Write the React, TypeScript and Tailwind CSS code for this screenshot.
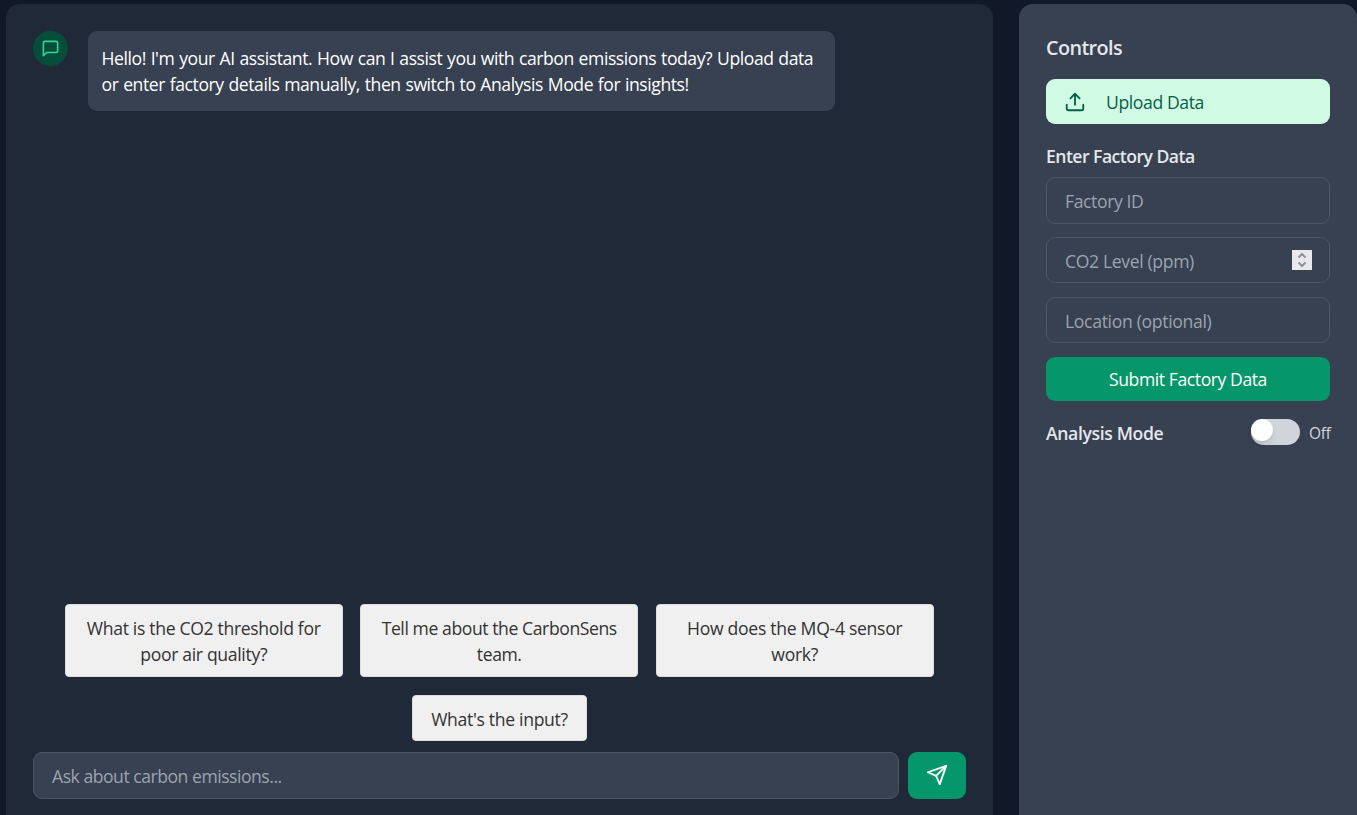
import React from "react";

const suggestions = [
  { lines: ["What is the CO2 threshold for", "poor air quality?"], tracking: "tracking-[-0.33px]" },
  { lines: ["Tell me about the CarbonSens", "team."], tracking: "tracking-[-0.42px]" },
  { lines: ["How does the MQ-4 sensor", "work?"], tracking: "tracking-[-0.3px]" },
];

const chip =
  "whitespace-nowrap rounded-[4px] border border-[#dddddd] bg-[#f0f0f0] pt-px text-center text-[#333333]";

const field =
  "block w-full rounded-[9px] border border-[#4b5563] bg-[#374151] pl-[18px] pt-px text-[17.6px] text-white placeholder-[#9ca3af] outline-none";

function ChatIcon() {
  return (
    <svg className="size-[19px]" viewBox="0 0 24 24" fill="none" stroke="#34d399" strokeWidth="2" strokeLinecap="round" strokeLinejoin="round">
      <path d="M21 15a2 2 0 0 1-2 2H7l-4 4V5a2 2 0 0 1 2-2h14a2 2 0 0 1 2 2z" />
    </svg>
  );
}

function UploadIcon() {
  return (
    <svg className="size-[22px]" viewBox="0 0 24 24" fill="none" stroke="currentColor" strokeWidth="2" strokeLinecap="round" strokeLinejoin="round">
      <path d="M21 15v4a2 2 0 0 1-2 2H5a2 2 0 0 1-2-2v-4" />
      <path d="M17 8l-5-5-5 5M12 3v12" />
    </svg>
  );
}

function SendIcon() {
  return (
    <svg className="size-[22px]" viewBox="0 0 24 24" fill="none" stroke="currentColor" strokeWidth="2" strokeLinecap="round" strokeLinejoin="round">
      <path d="M22 2 11 13" />
      <path d="M22 2l-7 20-4-9-9-4 20-7z" />
    </svg>
  );
}

export default function App() {
  return (
    <div className="flex h-[815px] w-full gap-[26px] overflow-hidden bg-[#111827] pl-[6px] pt-1 font-['Open_Sans','Noto_Sans',sans-serif] text-[17.6px] leading-[26px]">
      <main className="flex w-[987px] shrink-0 flex-col rounded-t-[14px] bg-[#1f2937] px-[27px] pb-4 pt-[27px]">
        <div className="flex items-start gap-5">
          <div className="flex size-[35px] items-center justify-center rounded-full bg-[#064e3b] pb-px">
            <ChatIcon />
          </div>
          <div className="h-20 w-[747px] whitespace-nowrap rounded-[9px] bg-[#374151] pl-[13.5px] pt-[14px] text-white [word-spacing:0.6px]">
            <p className="tracking-[-0.43px]">Hello! I'm your AI assistant. How can I assist you with carbon emissions today? Upload data</p>
            <p className="tracking-[-0.43px]">or enter factory details manually, then switch to Analysis Mode for insights!</p>
          </div>
        </div>

        <div className="mt-auto flex flex-col items-center gap-[18px]">
          <div className="flex gap-[17.5px] pr-[0.6px]">
            {suggestions.map(({ lines, tracking }) => (
              <button key={lines[0]} className={`h-[73px] w-[278px] ${chip} ${tracking}`}>
                {lines[0]}
                <br />
                {lines[1]}
              </button>
            ))}
          </div>
          <button className={`h-[46px] w-[175px] tracking-[-0.32px] ${chip}`}>What's the input?</button>
        </div>

        <div className="mt-[11px] flex gap-[9px]">
          <input className={`${field} h-[47px] min-w-0 flex-1 tracking-[-0.48px]`} placeholder="Ask about carbon emissions..." />
          <button aria-label="Send" className="flex h-[47px] w-[58px] items-center justify-center rounded-[9px] bg-[#059669] pb-[2px] text-white">
            <SendIcon />
          </button>
        </div>
      </main>

      <aside className="flex w-[338px] shrink-0 flex-col rounded-t-[14px] bg-[#374151] px-[27px] pt-[31px] text-[#e5e7eb]">
        <h2 className="whitespace-nowrap text-[19.8px] font-semibold tracking-[-0.6px]">Controls</h2>
        <button className="mt-[18px] flex h-[45px] items-center rounded-[9px] bg-[#d1fae5] pl-[18px] text-[#065f46]">
          <UploadIcon />
          <span className="ml-5 pt-px tracking-[-0.4px]">Upload Data</span>
        </button>
        <h3 className="mt-[19px] whitespace-nowrap font-semibold tracking-[-0.53px]">Enter Factory Data</h3>
        <div className="mt-2 flex flex-col gap-[14px]">
          <input className={`${field} h-[47px] tracking-[-0.4px]`} placeholder="Factory ID" />
          <div className="relative -mt-px">
            <input className={`${field} h-[46px] tracking-[-0.36px]`} placeholder="CO2 Level (ppm)" />
            <span className="absolute right-[18px] top-[13px] flex size-5 items-center justify-center bg-[#e9e9ed]">
              <svg className="size-5" viewBox="0 0 20 20" fill="none" stroke="#8f8f9d" strokeWidth="2">
                <path d="m6.5 7.5 3.5-3.5 3.5 3.5M6.5 12.5 10 16l3.5-3.5" />
              </svg>
            </span>
          </div>
          <input className={`${field} h-[46px] tracking-[-0.33px]`} placeholder="Location (optional)" />
          <button className="h-11 rounded-[9px] bg-[#059669] pb-px text-center tracking-[-0.43px] text-white">Submit Factory Data</button>
        </div>
        <div className="mt-[18px] flex h-[26px] items-center">
          <span className="whitespace-nowrap pt-px font-semibold tracking-[-0.36px]">Analysis Mode</span>
          <span className="ml-auto h-[26px] w-[49px] rounded-full bg-[#d1d5db]">
            <span className="block size-[22px] rounded-full bg-white shadow-md" />
          </span>
          <span className="ml-[9px] w-[21px] whitespace-nowrap pt-1 text-[15.4px] tracking-[-0.2px] text-[#d1d5db]">Off</span>
        </div>
      </aside>
    </div>
  );
}
